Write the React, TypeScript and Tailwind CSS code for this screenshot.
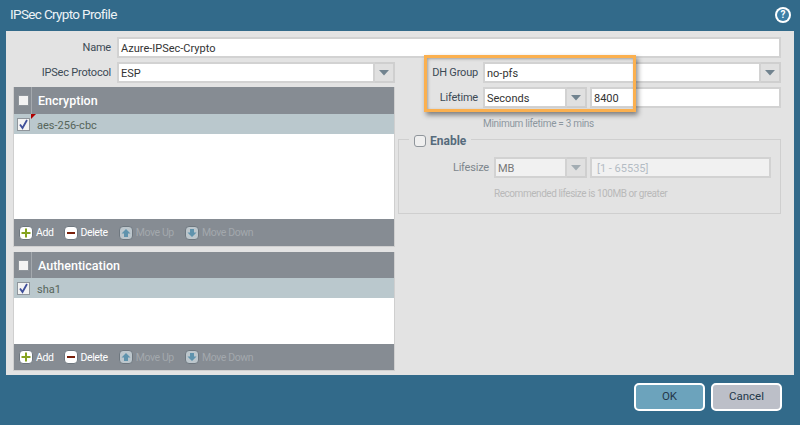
import React from "react";

function Arrow({ disabled }: { disabled?: boolean }) {
  return (
    <div className={"w-[20px] shrink-0 flex items-center justify-center border-[2px] border-l-0 border-[#cfcfcf] bg-[#e0e0e0]"}>
      <svg width="12" height="7" viewBox="0 0 12 7">
        <path d="M1 1h10L6 6.5z" fill={disabled ? "#a3adb3" : "#71838f"} />
      </svg>
    </div>
  );
}

function Field({ value, className, arrow, disabled, muted }: { value: string; className: string; arrow?: boolean; disabled?: boolean; muted?: boolean }) {
  return (
    <div className={"flex " + className}>
      <div
        className={
          "flex-1 min-w-0 flex items-center pl-[2px] pt-[1px] border-[2px] border-[#d2d2d2] " +
          (disabled ? "bg-[#f1f1f1] " : "bg-white ") +
          (muted ? "text-[#b4bcc4] pl-[5px]" : disabled ? "text-[#777]" : "text-[#333]")
        }
      >
        {value}
      </div>
      {arrow && <Arrow disabled={disabled} />}
    </div>
  );
}

function Check({ on, size }: { on?: boolean; size: string }) {
  return (
    <div className={"bg-[#f3f3f3] border border-[#8f959b] flex items-center justify-center " + size}>
      {on && (
        <svg width="11" height="11" viewBox="0 0 11 11">
          <path d="M2 5.5l2.5 3.5L9 1" fill="none" stroke="#3f4f9a" strokeWidth="1.8" />
        </svg>
      )}
    </div>
  );
}

function ToolIcon({ kind, off }: { kind: string; off?: boolean }) {
  return (
    <div
      className={
        "w-[14px] h-[14px] rounded-[4px] flex items-center justify-center border border-[#6f7880] " +
        (off ? "bg-[#bcc6cc]" : "bg-white")
      }
    >
      <svg width="10" height="10" viewBox="0 0 10 10">
        {kind === "add" && <path d="M4 0.5h2v3.5h3.5v2H6v3.5H4V6H0.5V4H4z" fill="#86a31f" />}
        {kind === "del" && <rect x="1" y="4" width="8" height="2" fill="#7a1f0a" />}
        {kind === "up" && <path d="M5 1l4.5 4.5H7V9H3V5.5H0.5z" fill="#5f93ad" />}
        {kind === "down" && <path d="M5 9L0.5 4.5H3V1h4v3.5h2.5z" fill="#5f93ad" />}
      </svg>
    </div>
  );
}

function Tool({ kind, label, off, className }: { kind: string; label: string; off?: boolean; className?: string }) {
  return (
    <div className={"flex items-center gap-[3px] " + (className ?? "")}>
      <ToolIcon kind={kind} off={off} />
      <span className={"pt-[2px] text-[10.5px] tracking-[-0.4px] " + (off ? "text-[#a3a8ad]" : "text-white")}>{label}</span>
    </div>
  );
}

function Grid({ title, row, height, bar, flag, className }: { title: string; row: string; height: string; bar: string; flag?: boolean; className?: string }) {
  return (
    <div className={"flex flex-col border border-t-0 border-[#cfcfcf] bg-white " + height + " " + (className ?? "")}>
      <div className={"shrink-0 bg-[#868c93] flex items-center " + bar}>
        <div className="w-[18px] h-full flex items-center justify-center pl-[1px] border-r border-[#a4a9ae]">
          <Check size="w-[11px] h-[11px]" />
        </div>
        <span className="pl-[6px] pt-[2px] font-medium text-[12.5px] text-white">{title}</span>
      </div>
      <div className="h-[20px] shrink-0 bg-[#bac8cd] flex items-center relative">
        <div className="w-[18px] flex justify-center">
          <Check on size="w-[13px] h-[13px]" />
        </div>
        {flag && <div className="absolute left-[17px] top-0 w-0 h-0 border-t-[5px] border-t-[#b00000] border-r-[5px] border-r-transparent" />}
        <span className="pl-[5px] pt-[2px] text-[#56655a]">{row}</span>
      </div>
      <div className="flex-1" />
      <div className={"shrink-0 bg-[#868c93] flex items-center pl-[5px] " + bar}>
        <Tool kind="add" label="Add" />
        <Tool kind="del" label="Delete" className="ml-[10px]" />
        <Tool kind="up" label="Move Up" off className="ml-[11px]" />
        <Tool kind="down" label="Move Down" off className="ml-[11px]" />
      </div>
    </div>
  );
}

export default function App() {
  return (
    <div className="w-[800px] h-[425px] bg-[#326a8a] flex flex-col text-[11px] leading-none font-['Roboto',sans-serif] overflow-hidden">
      <div className="h-[31px] shrink-0 flex items-center justify-between pl-[10px] pr-[9px] pb-[2px]">
        <span className="text-[13.5px] text-[#eef3f6] tracking-[-0.65px]">IPSec Crypto Profile</span>
        <div className="w-[16px] h-[16px] rounded-full bg-white flex items-center justify-center">
          <div className="w-[12px] h-[12px] rounded-full bg-[#3d7ea6] flex items-center justify-center text-white font-bold text-[10px]">?</div>
        </div>
      </div>

      <div className="relative ml-[6px] w-[788px] h-[344px] shrink-0 bg-[#e3e3e3] pt-[6px]">
        <div className="flex items-center">
          <div className="w-[105px] text-right text-[#3c4a55] tracking-[-0.2px]">Name</div>
          <Field value="Azure-IPSec-Crypto" className="ml-[6px] w-[664px] h-[21px]" />
        </div>

        <div className="flex mt-[4px] pl-[7px]">
          <div className="w-[382px] shrink-0">
            <div className="flex items-center">
              <div className="w-[98px] text-right text-[#3c4a55] tracking-[-0.2px]">IPSec Protocol</div>
              <Field value="ESP" className="ml-[6px] w-[278px] h-[21px]" arrow />
            </div>
            <Grid title="Encryption" row="aes-256-cbc" height="h-[160px]" bar="h-[27px]" flag className="mt-[4px]" />
            <Grid title="Authentication" row="sha1" height="h-[119px]" bar="h-[26px]" className="mt-[5px]" />
          </div>

          <div className="ml-[3px] w-[383px] shrink-0">
            <div className="flex items-center">
              <div className="w-[80px] text-right text-[#3c4a55] tracking-[-0.2px]">DH Group</div>
              <Field value="no-pfs" className="ml-[5px] w-[298px] h-[21px]" arrow />
            </div>
            <div className="flex items-center mt-[4px]">
              <div className="w-[80px] text-right text-[#3c4a55] tracking-[-0.2px]">Lifetime</div>
              <Field value="Seconds" className="ml-[5px] w-[104px] h-[21px]" arrow />
              <Field value="8400" className="ml-[3px] w-[191px] h-[21px]" />
            </div>
            <div className="mt-[11px] pl-[85px] text-[10px] tracking-[-0.3px] text-[#8d979f]">Minimum lifetime = 3 mins</div>

            <div className="mt-[10px] h-[75px] border border-[#cfcfcf] relative">
              <div className="absolute left-[10px] top-[-7px] flex items-center gap-[4px] bg-[#e3e3e3] px-[5px] h-[15px]">
                <div className="w-[12px] h-[12px] rounded-[3px] border border-[#8f959b] bg-[#efefef]" />
                <span className="font-bold text-[#566b7c] text-[12px]">Enable</span>
              </div>
              <div className="flex items-center pt-[17px]">
                <div className="w-[90px] text-right text-[#7d868d] tracking-[-0.2px]">Lifesize</div>
                <Field value="MB" className="ml-[5px] w-[93px] h-[21px]" arrow disabled />
                <Field value="[1 - 65535]" className="ml-[3px] w-[181px] h-[21px]" disabled muted />
              </div>
              <div className="mt-[11px] pl-[95px] text-[10px] tracking-[-0.45px] text-[#b9b9b9]">Recommended lifesize is 100MB or greater</div>
            </div>
          </div>
        </div>

        <div className="absolute left-[418px] top-[24px] w-[212px] h-[57px] border-[3px] border-[#fbb04f] shadow-[2px_3px_5px_rgba(0,0,0,0.45),inset_1px_1px_3px_rgba(0,0,0,0.3)]" />
      </div>

      <div className="flex-1 flex justify-end items-start pt-[8px] pr-[18px] gap-[6px] text-[11.5px]">
        <button className="w-[71px] h-[28px] rounded-[5px] border-2 border-white bg-[#6ca3bc] text-[#24384a]">OK</button>
        <button className="w-[71px] h-[28px] rounded-[5px] border-2 border-white bg-[#bcbfc8] text-[#24384a]">Cancel</button>
      </div>
    </div>
  );
}
